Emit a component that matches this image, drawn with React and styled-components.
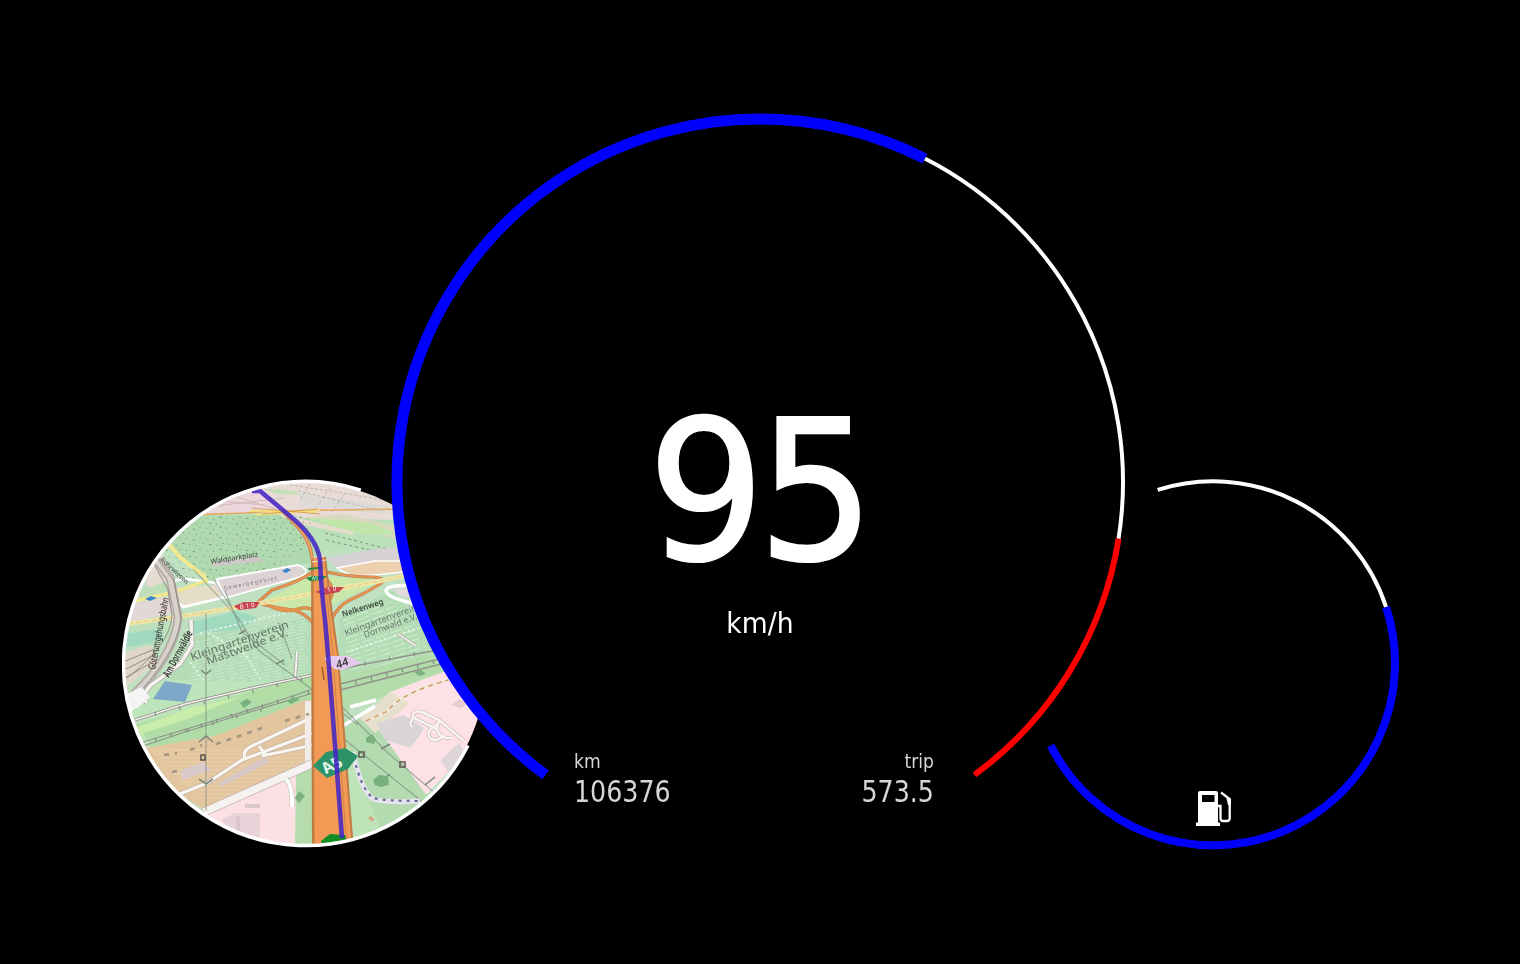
import React from "react";
import styled, { createGlobalStyle } from "styled-components";

const Global = createGlobalStyle`
  body { margin: 0; background: #000; }
`;
const Screen = styled.main`
  box-sizing: border-box;
  width: 1520px;
  height: 964px;
  padding: 114px 0 0 122px;
  overflow: hidden;
  background: #000;
  color: #fff;
  font-family: "DejaVu Sans Condensed", "DejaVu Sans", sans-serif;
  font-stretch: condensed;
`;
const Cluster = styled.div`
  display: flex;
  align-items: flex-end;
  height: 734px;
`;
const SmallGauge = styled.svg`
  display: block;
  flex: none;
  width: 370px;
  height: 370px;
  margin-left: ${(p) => p.$overlap || 0}px;
  overflow: ${(p) => (p.$overlap ? "visible" : "hidden")};
`;
const MainGauge = styled.section`
  position: relative;
  flex: none;
  box-sizing: border-box;
  width: 736px;
  height: 734px;
  margin-left: -100px;
  padding-top: 267px;
  display: flex;
  flex-direction: column;
  align-items: center;
`;
const DialFace = styled.svg`
  position: absolute;
  inset: 0;
  width: 736px;
  height: 734px;
  overflow: visible;
`;
const Speed = styled.div`
  position: relative;
  font-size: 194.5px;
  line-height: 221px;
  height: 220px;
  letter-spacing: -6.5px;
  padding-right: 5px;
  -webkit-text-stroke: 2.2px #fff;
  stroke-linejoin: round;
  transform: scaleX(1.05);
`;
const Unit = styled.div`
  position: relative;
  font-size: 29px;
  line-height: 34px;
  margin-top: 5px;
  transform: scaleX(1.02);
`;
const Readings = styled.div`
  position: relative;
  display: flex;
  justify-content: space-between;
  width: 360px;
  margin: 109px 12px 0 0;
  color: #d6d6d6;
`;
const Reading = styled.div`
  text-align: ${(p) => p.$align};
  transform: scaleX(0.955);
  transform-origin: ${(p) => p.$align};
`;
const Caption = styled.div`
  font-size: 20px;
  line-height: 24px;
`;
const Value = styled.div`
  font-size: 29.5px;
  line-height: 39px;
`;
const Area = styled.path`
  fill: ${(p) => p.$c};
`;
const Line = styled.path`
  fill: none;
  stroke: ${(p) => p.$c || "#fff"};
  stroke-width: ${(p) => p.$w || 1};
  stroke-dasharray: ${(p) => p.$dash || "none"};
  opacity: ${(p) => p.$o || 1};
`;
const Label = styled.text`
  font-family: "Noto Sans", sans-serif;
  font-stretch: normal;
  font-size: ${(p) => p.$s || 9}px;
  font-weight: ${(p) => p.$b || 400};
  fill: ${(p) => p.$c || "#555"};
`;

// Clockwise arc between two angles in degrees, drawn as two halves.
function arc(cx, cy, r, from, to) {
  const at = (deg) => {
    const a = (deg * Math.PI) / 180;
    return `${(cx + r * Math.cos(a)).toFixed(2)} ${(cy + r * Math.sin(a)).toFixed(2)}`;
  };
  return `M${at(from)}A${r} ${r} 0 0 1 ${at((from + to) / 2)}A${r} ${r} 0 0 1 ${at(to)}`;
}

function Cased({ d, w, c = "#f4f1ef", edge = "#aaa59f" }) {
  return (
    <>
      <Line d={d} $w={w + 1.4} $c={edge} />
      <Line d={d} $w={w} $c={c} />
    </>
  );
}

const trees = [];
for (let r = 0; r < 11; r++) {
  const y = 518 + r * 4.6 + r * r * 0.12;
  for (let i = 0; i < 23; i++) {
    const x = 166 + i * 6.7 + (r % 2) * 3;
    if (x < 313 && y - 512 < (330 - x) * 0.7 + 18) trees.push([x, y + Math.sin(i * 2.1) * 1.2]);
  }
}

const ramps =
  "M314 571Q299 582 272 590L257 603Q275 608 293 610Q305 613 314 624M327 572Q349 577 372 577Q389 578 380 584Q366 593 350 600Q337 606 331 621M262 602Q283 615 298 609Q309 606 314 611M327 580Q337 590 328 603";
const carParks =
  "M422 712Q410 710 414 718L437 729Q439 739 451 738M414 716Q408 724 412 727M437 724Q424 732 431 739Q438 742 444 735M422 712L439 720L437 729M439 720L464 741";

function NavMap() {
  return (
    <SmallGauge viewBox="122 478 370 370">
      <defs>
        <clipPath id="lens"><circle cx="305.5" cy="663.5" r="181" /></clipPath>
        <filter id="far"><feGaussianBlur stdDeviation="0.5" /></filter>
        <filter id="ink"><feGaussianBlur stdDeviation="0.3" /></filter>
      </defs>
      <g clipPath="url(#lens)">
        <g filter="url(#far)">
          <Area d="M115 470H500V860H115Z" $c="#bfe1c1" />
          {/* town on the horizon */}
          <Area d="M180 515L225 480H400V550L330 528L280 510Z" $c="#e9dcd6" />
          <Area d="M215 496L260 486L285 512L200 514Z" $c="#ecd7dc" />
          <Area d="M263 489L283 489L308 495L278 494Z" $c="#c3dfb7" />
          <Area d="M300 493L390 506V514L300 507Z" $c="#dddad8" />
          <Line d="M290 485L350 494L400 504M298 491L382 511M310 484L300 500M330 488L318 505M345 493L332 512" $c="#aaa4a0" $w=".7" $dash="3 2" />
          <Line d="M210 500L265 505M214 506L285 498M230 495L275 509M240 489L220 508" $c="#d2bbb9" $w="1" />
          {/* forest */}
          <Area d="M198 516L280 514L318 540L318 561L240 578L206 582L165 545L175 525Z" $c="#b0d9b0" />
          <Area d="M298 518L402 520V552L340 549L320 552Z" $c="#bbdfb8" />
          <Area d="M276 514L290 516L355 532L352 535L300 524Z" $c="#e6dccb" />
          <Area d="M312 516L345 514L402 528V540L350 528Z" $c="#d9d9c0" />
          <Area d="M306 517L370 523L400 535L360 534Z" $c="#bfe6a8" />
          {trees.map(([x, y], i) => (
            <rect key={i} x={x} y={y} width={i % 4 ? 1 : 2} height="1" fill="#6e9a78" />
          ))}
          <Line d="M325 533L400 552M326 540L378 552" $c="#78987e" $w="1" $dash="3 3" />
          <Area d="M211 563L257 556L264 561L214 567Z" $c="#cdc9c6" />
          <Line d="M188 515L245 513L277 511L400 509" $c="#e3a85a" $w="1.6" />
          <Line d="M250 511L315 512M255 515L320 510" $c="#f0dc78" $w="2" />
          <Line d="M252 508L320 514M262 514L318 509" $c="#d8964a" $w=".8" />
          {/* industrial estates */}
          <Area d="M217 579L298 565L305 570L300 577L224 598L212 587Z" $c="#ddd3d5" />
          <Line d="M217 579L298 565Q309 569 305 574L300 577L225 598Z" $w="1.8" />
          <Area d="M326 558L374 549L403 547L407 560L339 570Z" $c="#d6d1d4" />
          <Area d="M339 568L375 560L405 562L412 573L355 576Z" $c="#ecd1af" />
          <Line d="M336 568L375 561L402 561M338 569L352 576Q385 575 410 571" $w="1.5" />
          <Area d="M173 588L213 585L224 597L183 606Z" $c="#e4dec9" />
          <Line d="M170 584Q178 577 193 580L216 583L226 597L183 607Q172 596 170 584" $w="2.6" />
          <Area d="M143 570L160 550L175 581L150 596Z" $c="#e5dbd0" />
          <Area d="M140 590L165 582L172 590L140 600Z" $c="#bfdfb9" />
          <Area d="M135 603L172 596L177 613L128 622Z" $c="#e4d7d8" />
          <Area d="M124 625L170 618L178 640L124 655Z" $c="#bce0bd" />
          {/* meadows and allotments */}
          <Area d="M122 634L160 629L164 640L123 648Z" $c="#a0d8c0" />
          <Area d="M188 623L238 611L258 618L240 630L190 634Z" $c="#a0dabf" />
          <Area d="M192 637L310 617L312 686L242 696L190 700L170 678Z" $c="#b3dcb7" />
          <Area d="M340 618L392 590L426 628L437 662L338 675Z" $c="#b4ddb5" />
          {Array.from({ length: 20 }, (_, i) => (
            <Line key={`l${i}`} d={`M${190 + (i % 5)} ${644 + i * 3}L${309} ${616 + i * 3.2}`} $c="#cdeaca" $w="1.2" $dash="9 3" $o=".8" />
          ))}
          {Array.from({ length: 13 }, (_, i) => (
            <Line key={`r${i}`} d={`M${343 + i * 0.8} ${621 + i * 4.4}L${391 + i * 3.4} ${602 + i * 4}`} $c="#cfebcc" $w="1.3" $dash="12 3" $o=".85" />
          ))}
          <Line d="M208 633L246 655L264 685M190 662L218 700M200 633L290 612M346 652L424 626" $c="#e8f5ea" $w="1.8" $dash="2.5 2.5" $o=".9" />
          <Cased d="M297 652L295 680" w={2} />
          <Cased d="M398 634L416 646" w={1.8} />
          {/* motorway junction */}
          <Area d="M258 603Q281 593 312 575L316 611L288 612Q264 606 258 603" $c="#cae9a9" />
          <Area d="M328 577L372 579Q379 580 374 584L330 606Z" $c="#cae9a9" />
          <Line d={ramps} $c="#bd7744" $w="3.2" />
          <Line d={ramps} $c="#e59450" $w="2.2" />
          <Line d="M128 624L190 615L250 605L312 594L400 577L415 574" $c="#ede6aa" $w="4.5" />
          <Line d="M128 624L190 615L250 605L312 594L400 577L415 574" $c="#e8cf86" $w="1.2" $dash="5 3" />
          <Line d="M165 540L181 558L205 577" $c="#f3e891" $w="4" />
          <Line d="M135 601L175 592L208 580M203 573L207 583" $c="#f2e891" $w="3.4" />
          <Line d="M418 586Q386 584 386 591Q388 599 422 605" $c="#fff" $w="3.4" />
          <Area d="M392 590Q402 587 416 589V600L402 597Z" $c="#dedadc" />
          {/* lower meadow */}
          <Area d="M123 690L168 680L252 682L311 680V710L138 744L128 715Z" $c="#bde4bb" />
          <Area d="M133 725L235 696L312 674L312 689L145 735Z" $c="#b2dea6" />
          <Area d="M135 728L190 708L240 697L180 722L142 736Z" $c="#c9edaa" />
          <Area d="M143 733L225 708L312 687L314 714L152 749Z" $c="#b0dda7" />
          <Area d="M338 676L430 654L445 672L341 713Z" $c="#b2dca9" />
          {/* railway corridor */}
          <Area d="M120 654L150 645L158 662L122 690Z" $c="#ded7c9" />
          <Line d="M153 555L170 578L178 617Q176 648 145 683L128 700" $c="#b5aea9" $w="9" />
          <Line d="M153 555L170 578L178 617Q176 648 145 683L128 700" $c="#d9d2cc" $w="5" />
          <Line d="M155 555L174 581L181 619Q176 656 131 701M153 562L168 590L172 616Q170 645 127 678M123 662L155 649M124 670L156 654M125 678L156 660" $c="#8b837d" $w=".9" />
          <Cased d="M191 620L192 645L180 664L151 685Q140 697 147 703" w={3.6} />
          <Area d="M126 694L142 687L150 697L140 706L130 712Z" $c="#f5f3f4" />
          <Area d="M165 681L192 685L185 702L153 699Z" $c="#7da8c8" />
          {/* railway yards */}
          <Area d="M145 748L215 736L305 700L314 700V762L206 811L175 791Z" $c="#e3c69f" />
          {Array.from({ length: 13 }, (_, i) => (
            <Line key={`y${i}`} d={`M${150 + i * 4} ${750 + i * 4}H312`} $c="#eed5b0" $w="1.2" $o=".7" />
          ))}
          <Cased d="M135 720L185 704L252 688L313 675" w={1.6} edge="#8f8b86" />
          <Line d="M143 746L188 731L240 715L313 693M143 742L200 725L275 702L313 689M340 669L437 650M340 684L443 658M340 690L445 663" $c="#92938c" $w="1.3" />
          <Line d="M140 745L188 730L240 713L313 691M340 687L442 660" $c="#79817b" $w="4" $dash="1 15" />
          <Line d="M188 730L270 708M155 714L308 678M340 668L425 652" $c="#85847d" $w="4" $dash="1 24" />
          {/* industrial ground */}
          <Area d="M206 811L305 766V850H200Z" $c="#fde0e4" />
          <Area d="M296 775L318 762V850H295Z" $c="#b6dcae" />
          <Area d="M390 692L448 670L485 715L468 752L426 795L363 719Z" $c="#fee1e6" />
          <Area d="M340 714L371 719L427 796L400 828L350 850Z" $c="#b4dbaf" />
          <Area d="M342 744L353 752L382 835L352 850Z" $c="#bfe3b8" />
          <Area d="M360 718L390 692L410 703L375 733Z" $c="#e5dfcc" />
          <Area d="M377 724L404 715L424 728L420 735L410 748L385 740Z" $c="#d9d5d7" />
          <Area d="M441 760L459 743L468 756L450 776Z" $c="#ded5d9" />
          <Area d="M451 705L460 699L467 704L461 708Z" $c="#e7cdd3" />
          <Line d={carParks} $c="#c4b7b8" $w="3.8" />
          <Line d={carParks} $c="#fbf4f4" $w="2.5" />
          <Line d="M366 721L388 711Q399 694 448 680" $c="#f1e9dc" $w="3" />
          <Line d="M366 721L388 711Q399 694 448 680" $c="#cf9a68" $w="1.4" $dash="5 4" />
          <Area d="M180 771L203 762L211 770L183 780Z" $c="#d9cacb" />
          <Area d="M217 784L264 757L270 762L222 786Z" $c="#d6c7c5" />
          <Area d="M222 819L235 813H260V842L230 835Z" $c="#e8d3d8" />
          <Line d="M238 816V839M245 806H260" $c="#dac8cc" $w="4" />
          <Line d="M180 794L207 783L242 760L313 733M313 745L262 756M245 759Q242 750 252 746L313 717M259 746L266 755" $c="#c0afa2" $w="4.6" />
          <Line d="M180 794L207 783L242 760L313 733M313 745L262 756M245 759Q242 750 252 746L313 717M259 746L266 755" $c="#faf5f0" $w="3.2" />
          <Line d="M308 701V765" $c="#f2ece8" $w="6" />
          <Line d="M204 812L316 762" $c="#b9aaa0" $w="9" />
          <Line d="M204 812L316 762" $c="#f5f2f1" $w="7.6" />
          <Line d="M341 727L375 706M350 707L376 700" $w="3.8" />
          <Line d="M286 779Q293 787 292 807" $c="#bbb" $w="5" />
          <Line d="M286 779Q293 787 292 807" $w="4" />
          {/* power line and footpaths */}
          <Line d="M206 613V811M214 580L258 650L313 690L358 725M340 705L388 753L443 800M292 659L280 625M339 735L425 804M225 591L242 632L285 665M193 569L240 620" $c="#77857b" $w="1.1" $o=".65" />
          <Line d="M199 779L206 784L213 779M201 670L206 674L211 670M199 742L206 736L213 742M381 749L390 744M425 785L435 777M379 783L390 774M276 664L284 660M239 634L246 630" $c="#7b867e" $w="1.6" />
          <Line d="M353 752Q360 788 373 799Q384 803 420 801" $c="#e5e4ef" $w="5" />
          <Line d="M354 757Q361 789 373 798Q386 801 420 801" $c="#69698f" $w="2.2" $dash="3 5" />
          <Line d="M164 755L177 753M190 750L202 745M216 744L265 727M285 721L309 714M172 772L182 770" $c="#a39680" $w="2.6" $dash="5 6" />
          <Area d="M240 703L247 699L252 702L244 708ZM287 701L293 697L300 699L291 704ZM366 738L372 734L376 739L374 744L366 742ZM373 780L379 775L388 776L389 785L381 787L375 785ZM295 798L299 791L305 796L299 803ZM414 672L421 670L426 674L419 676Z" $c="#78b080" />
          <Line d="M201 755H205V760H201ZM359 752H364V757H359ZM400 762H405V767H400Z" $c="#5f5751" $w="1.6" />
          {/* motorway carriageways */}
          <Area d="M311 557H326L331 600L339 656L354 850H312Z" $c="#c07b45" />
          <Area d="M313.5 557H324L329 600L337 656L352 850H314.5Z" $c="#f29a55" />
          <Line d="M326 588L333 656L347 850" $c="#c98043" $w=".9" />
          <Line d="M322 667L324 680" $c="#a65825" $w="1.5" />
          <Line d="M310 558L324 556M312 562L326 560" $c="#f3e6e2" $w="1.2" />
          <Line d="M282 510L294 523Q311 540 312 559" $c="#c67745" $w="3.4" />
          <Line d="M282 510L294 523Q311 540 312 559" $c="#f0a064" $w="2" />
        </g>

        <g filter="url(#ink)">
          <Label $s="7" $c="#444" transform="translate(211 564) rotate(-9)" textLength="48" lengthAdjust="spacingAndGlyphs">Waldparkplatz</Label>
          <Label $s="5.5" $c="#8c7c80" transform="translate(224 590) rotate(-11)" textLength="54">Gewerbegebiet</Label>
          <Label $s="6.5" $c="#444" transform="translate(160 560) rotate(43)">Rohrwiesen</Label>
          <Label $s="11" $c="#667569" transform="translate(192 661) rotate(-19)" textLength="103" lengthAdjust="spacingAndGlyphs">Kleingartenverein</Label>
          <Label $s="11" $c="#667569" transform="translate(208 665) rotate(-20)" textLength="86" lengthAdjust="spacingAndGlyphs">Mastweide e.V.</Label>
          <Label $s="8" $b="600" $c="#39443a" transform="translate(343 617) rotate(-18)" textLength="43" lengthAdjust="spacingAndGlyphs">Nelkenweg</Label>
          <Label $s="9" $c="#68766c" transform="translate(346 636) rotate(-20)" textLength="76" lengthAdjust="spacingAndGlyphs">Kleingartenverein</Label>
          <Label $s="9" $c="#68766c" transform="translate(365 638) rotate(-20)" textLength="56" lengthAdjust="spacingAndGlyphs">Dornwald e.V.</Label>
          <Label $s="10" $b="500" $c="#3d3836" transform="translate(155 670) rotate(-79)" textLength="73" lengthAdjust="spacingAndGlyphs">Güterumgehungsbahn</Label>
          <Label $s="10.5" $b="600" $c="#333" transform="translate(169 678) rotate(-62)" textLength="51" lengthAdjust="spacingAndGlyphs">Am Dornwäldle</Label>
        </g>
        <Area d="M234 606L244 602L260 602L256 608L239 610ZM315 592L328 587L344 587L339 592L324 595Z" $c="#c94550" />
        <Label $s="6" $c="#fff" transform="translate(240 609) rotate(-9)" textLength="15">B10</Label>
        <Label $s="6" $c="#fff" transform="translate(321 593) rotate(-10)" textLength="16">B10</Label>
        <Area d="M306 578L314 576L327 576L322 580L310 581ZM308 568L319 567L325 568L309 570Z" $c="#198b45" />
        <Label $s="5" $c="#fff" transform="translate(312 580) rotate(-5)">A5</Label>
        <Area d="M145 599L151 596L157 598L150 601ZM282 571L287 568L291 570L286 573Z" $c="#3986ca" />
        <Area d="M324 658L331 656L348 656L361 663L342 670L334 669Z" $c="#e5c8ed" />
        <Label $s="11" $b="600" $c="#333" transform="translate(337 669) rotate(-20) skewX(-8)">44</Label>
        <Area d="M313 766L326 752L345 748L358 756L348 769L327 778Z" $c="#2c9369" />
        <Label $s="16" $b="700" $c="#e5f7e9" transform="translate(326 774) rotate(-25) skewX(12)">A5</Label>
        <Area d="M321 841L330 834L345 835L350 850H324Z" $c="#118d22" />
        <Label $s="9" $b="700" $c="#df8c70" transform="translate(371 822) rotate(-35)">s</Label>
        <Line d="M252 491L260 491L290 516Q317 538 320 560Q321 587 325 620Q328 650 342 838" $c="#4426c4" $w="4.6" $o=".88" />
      </g>
      <Line d={arc(305.5, 663.5, 182, 26.8, 287.7)} $w="3.5" />
    </SmallGauge>
  );
}

function FuelGauge() {
  return (
    <SmallGauge $overlap={-100} viewBox="1028 478 370 370">
      <Line d={arc(1213, 663.3, 182, -107.7, -18)} $w="4" />
      <Line d={arc(1213, 663.3, 182, -18, 153.1)} $c="#00f" $w="8" />
      <path fill="#fff" fillRule="evenodd" d="M1198 793Q1198 791 1200 791H1216Q1218 791 1218 793V822.5H1220V826H1196V822.5H1198ZM1202 795V802H1214.5V795Z" />
      <Line d="M1218 806H1220.5V818.5Q1220.5 821 1223 821H1227Q1229.7 821 1229.7 818V799L1221 792.5" $w="2.3" />
      <Area d="M1226 796L1231 799V805H1228Z" $c="#fff" />
    </SmallGauge>
  );
}

export default function App() {
  return (
    <Screen>
      <Global />
      <Cluster>
        <NavMap />
        <MainGauge>
          <DialFace viewBox="392 114 736 734">
            <circle cx="760" cy="482" r="362" fill="#000" />
            <Line d={arc(760, 482, 363, -63, 9)} $w="4" />
            <Line d={arc(760, 482, 363, 9, 53.8)} $c="#f00" $w="6" />
            <Line d={arc(760, 482, 363, 126.2, 297)} $c="#00f" $w="11" />
          </DialFace>
          <Speed>95</Speed>
          <Unit>km/h</Unit>
          <Readings>
            <Reading $align="left"><Caption>km</Caption><Value>106376</Value></Reading>
            <Reading $align="right"><Caption>trip</Caption><Value>573.5</Value></Reading>
          </Readings>
        </MainGauge>
        <FuelGauge />
      </Cluster>
    </Screen>
  );
}
